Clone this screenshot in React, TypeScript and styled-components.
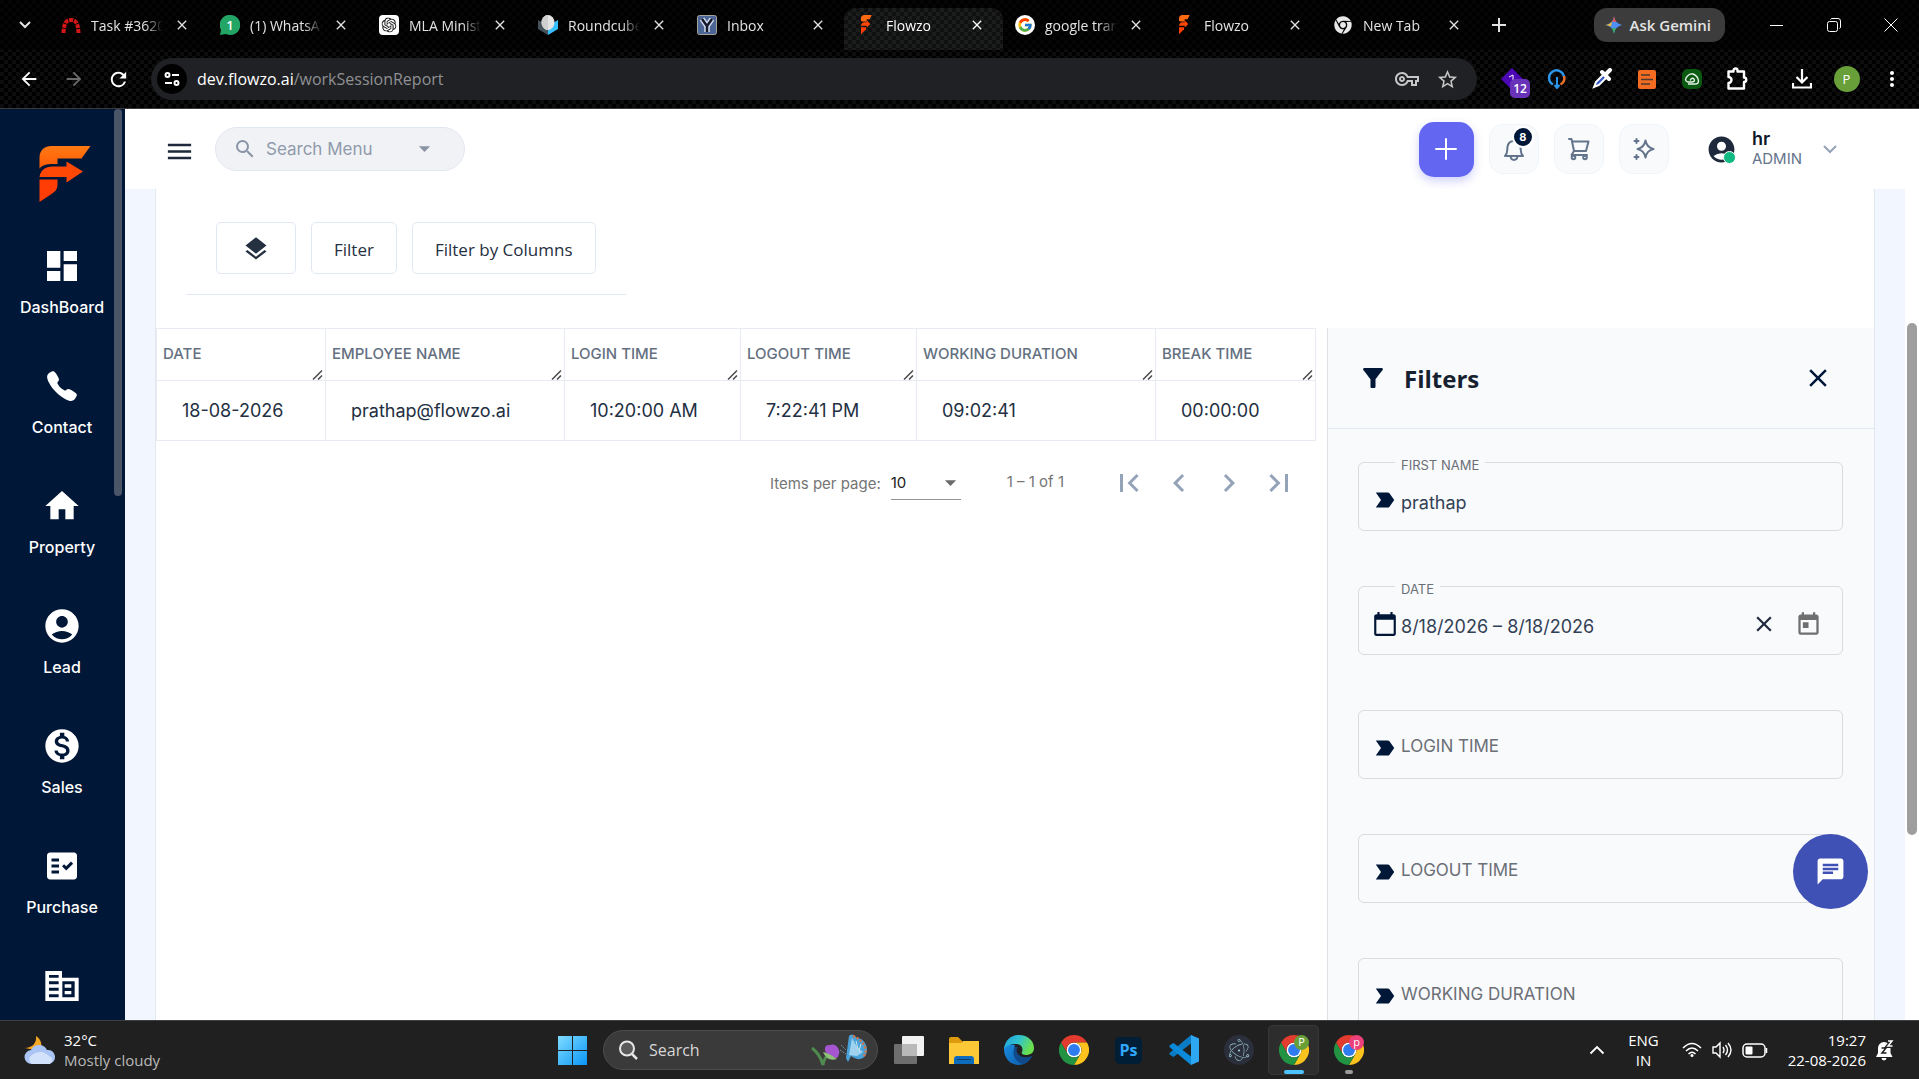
import React from 'react';
import styled, { createGlobalStyle, css } from 'styled-components';
import {
  MdAccountCircle, MdArrowBack, MdArrowDropDown, MdArrowForward, MdCalendarToday, MdChat,
  MdChevronLeft, MdChevronRight, MdClose, MdDashboard, MdFactCheck, MdFilterAlt, MdFirstPage, MdHome,
  MdLabelImportant, MdLastPage, MdLayers, MdMenu, MdMonetizationOn, MdMoreVert, MdOutlineExtension,
  MdOutlineVpnKey, MdRefresh, MdSearch, MdStarBorder, MdToday,
} from 'react-icons/md';
import { IoCall } from 'react-icons/io5';
import { FaChrome } from 'react-icons/fa';
import { FcGoogle } from 'react-icons/fc';
import { SiElectron, SiOpenai } from 'react-icons/si';

const ui = '"Open Sans", "Noto Sans", sans-serif';
const inter = 'Inter, "Liberation Sans", sans-serif';
const navy = '#011738';

const Global = createGlobalStyle`
  *, *::before, *::after { box-sizing: border-box; }
  body { margin: 0; background: #000; font-family: ${inter}; }
  button, input, select { font: inherit; color: inherit; margin: 0; }
  button { border: 0; padding: 0; background: none; cursor: pointer; }
  svg { display: block; flex: none; }
  a { color: inherit; text-decoration: none; }
`;

const Screen = styled.div`
  height: 100vh;
  display: flex;
  flex-direction: column;
  overflow: hidden;
`;

/* ---------- browser frame ---------- */

const checker = (a: string, b: string) => css`
  background: repeating-conic-gradient(${a} 0% 25%, ${b} 0% 50%) 0 0 / 8px 8px;
`;

const Browser = styled.header`
  flex: none;
  font-family: ${ui};
  color: #e3e3e3;
  border-bottom: 1px solid #3a3a3a;
  ${checker('#000', '#0d0d0d')}
`;

const TabStrip = styled.div`
  display: flex;
  align-items: center;
  height: 50px;
  background: rgba(0, 0, 0, 0.6);
`;

const StripButton = styled.button<{ $w: number }>`
  width: ${(p) => p.$w}px;
  height: 34px;
  display: grid;
  place-items: center;
`;

const Tabs = styled.div`
  display: flex;
  flex: 0 1 1431px;
  min-width: 0;
  align-self: stretch;
`;

const Tab = styled.div<{ $active?: boolean }>`
  flex: 1 1 0;
  min-width: 0;
  display: flex;
  align-items: center;
  gap: 10px;
  margin-top: 8px;
  padding: 0 15px 8px 12px;
  font-size: 14px;
  border-radius: 12px 12px 0 0;
  ${(p) => p.$active && css`color: #fff; ${checker('#101010', '#1b1c1c')}`}
`;

const TabTitle = styled.span`
  flex: 1;
  min-width: 0;
  overflow: hidden;
  white-space: nowrap;
  mask-image: linear-gradient(90deg, #000 75%, transparent 100%);
`;

const CloseTab = styled.button`
  width: 18px;
  height: 18px;
  display: grid;
  place-items: center;
  margin-right: 2px;
`;

const Gemini = styled.button`
  display: flex;
  align-items: center;
  gap: 7px;
  height: 34px;
  margin-left: auto;
  padding: 0 14px 0 11px;
  border-radius: 13px;
  background: #3c3c3c;
  font-size: 15px;
  font-weight: 600;
`;

const WindowControls = styled.div`
  display: flex;
  margin-left: 23px;
`;

const Toolbar = styled.div`
  display: flex;
  align-items: center;
  height: 58px;
  padding: 0 5px 0 6px;
`;

const ToolButton = styled.button<{ $dim?: boolean }>`
  width: 45px;
  height: 40px;
  display: grid;
  place-items: center;
  position: relative;
  color: ${(p) => (p.$dim ? '#6b6b6b' : '#fff')};
`;

const ToolGroup = styled.div`
  display: flex;
  margin-left: 20px;
`;

const Omnibox = styled.div`
  flex: 1;
  display: flex;
  align-items: center;
  height: 42px;
  margin: 0 12px 0 10px;
  padding: 0 10px 0 6px;
  border-radius: 21px;
  background: #202124;
  color: #c7c7c7;
  font-size: 16px;
`;

const SiteInfo = styled.button`
  width: 30px;
  height: 30px;
  border-radius: 50%;
  background: #000;
  color: #fff;
  display: grid;
  place-items: center;
  margin-right: 10px;
`;

const Url = styled.span`
  flex: 1;
  color: #8f9093;
  b { color: #fff; font-weight: 400; }
`;

const OmniButton = styled.button`
  width: 40px;
  height: 34px;
  display: grid;
  place-items: center;
`;

const ExtBadge = styled.span`
  position: absolute;
  left: 21px;
  top: 20px;
  width: 20px;
  height: 19px;
  border-radius: 5px;
  background: #6833b8;
  font-size: 12px;
  line-height: 19px;
  font-weight: 600;
  text-align: center;
`;

const Avatar = styled.span`
  width: 26px;
  height: 26px;
  border-radius: 50%;
  background: #689f38;
  font-size: 13px;
  line-height: 26px;
  text-align: center;
`;

/* ---------- application ---------- */

const AppBody = styled.div`
  flex: 1;
  min-height: 0;
  display: flex;
  background: #f2f6fe;
`;

const Sidebar = styled.nav`
  flex: none;
  width: 125px;
  display: flex;
  background: ${navy};
  color: #fff;
  overflow: hidden;
`;

const SideList = styled.div`
  flex: 1;
  display: flex;
  flex-direction: column;
  align-items: center;
  padding: 37px 0 0 10px;
`;

const SideItem = styled.a`
  flex: none;
  height: 120px;
  display: flex;
  flex-direction: column;
  align-items: center;
  gap: 11px;
  font-size: 16px;
  line-height: 20px;
  font-weight: 500;
`;

const SideIcon = styled.span`
  width: 40px;
  height: 40px;
  display: grid;
  place-items: center;
`;

const Brand = styled.a`
  flex: none;
  height: 100px;
  padding-left: 6px;
`;

const SideThumb = styled.div`
  width: 8px;
  height: 387px;
  margin-right: 3px;
  border-radius: 4px;
  background: #4a5568;
`;

const Main = styled.main`
  flex: 1;
  min-width: 0;
  display: flex;
  flex-direction: column;
`;

const TopBar = styled.div`
  flex: none;
  height: 80px;
  display: flex;
  align-items: center;
  padding: 0 65px 0 39px;
  background: #fff;
  color: #1e293b;
`;

const MenuButton = styled.button`
  padding-top: 4px;
  margin-right: 20px;
`;

const SearchPill = styled.label`
  width: 250px;
  height: 44px;
  display: flex;
  align-items: center;
  margin: 0 auto 1px 0;
  padding: 0 26px 0 17px;
  border: 1px solid #e2e8f0;
  border-radius: 22px;
  background: #f1f2f6;
  color: #8a94a6;
`;

const SearchInput = styled.input`
  flex: 1;
  min-width: 0;
  margin-left: 9px;
  border: 0;
  outline: 0;
  padding: 0;
  background: none;
  font-size: 17px;
  &::placeholder { color: #8f9aab; opacity: 1; }
`;

const AddButton = styled.button`
  width: 55px;
  height: 55px;
  display: grid;
  place-items: center;
  border-radius: 15px;
  background: #6366f1;
  color: #fff;
  box-shadow: 0 4px 10px rgba(99, 102, 241, 0.3);
`;

const SquareButton = styled.button`
  width: 50px;
  height: 50px;
  display: grid;
  place-items: center;
  position: relative;
  margin-left: 15px;
  border: 1px solid #f1f5f9;
  border-radius: 14px;
  background: #f8fafc;
  color: #64748b;
`;

const Count = styled.span`
  position: absolute;
  right: 4px;
  top: 1px;
  width: 22px;
  height: 22px;
  border: 2px solid #fff;
  border-radius: 50%;
  background: ${navy};
  color: #fff;
  font-size: 11px;
  line-height: 18px;
  font-weight: 700;
`;

const Profile = styled.button`
  display: flex;
  align-items: center;
  margin-left: 37px;
  text-align: left;
`;

const ProfileIcon = styled.span`
  position: relative;
  color: #1e293b;
  &::after {
    content: '';
    position: absolute;
    right: 1px;
    bottom: 1px;
    width: 13px;
    height: 13px;
    border: 1px solid #fff;
    border-radius: 50%;
    background: #10b981;
  }
`;

const ProfileText = styled.span`
  display: flex;
  flex-direction: column;
  margin: 0 18px 2px 15px;
  font-size: 15px;
  line-height: 20px;
  color: #64748b;
  b { font-size: 18px; line-height: 21px; font-weight: 600; color: #0f172a; }
`;

const Sheet = styled.section`
  flex: 1;
  min-height: 0;
  display: flex;
  flex-direction: column;
  margin: 0 30px;
  border: 1px solid #e2e8f0;
  border-width: 0 1px;
  background: #fff;
`;

const Actions = styled.div`
  align-self: flex-start;
  display: flex;
  gap: 15px;
  margin: 0 30px 33px;
  padding: 33px 30px 20px;
  border-bottom: 1px solid #e2e8f0;
`;

const ActionButton = styled.button`
  min-width: 80px;
  height: 52px;
  display: grid;
  place-items: center;
  padding: 2px 22px 0;
  border: 1px solid #e2e8f0;
  border-radius: 5px;
  color: #253041;
  font-family: ${ui};
  font-size: 17px;
  font-weight: 500;
`;

const Split = styled.div`
  flex: 1;
  min-height: 0;
  display: flex;
`;

const TablePane = styled.div`
  flex: 1;
  min-width: 0;
  padding-right: 12px;
`;

const Table = styled.table`
  width: 100%;
  table-layout: fixed;
  border-collapse: collapse;
`;

const Th = styled.th`
  position: relative;
  height: 52px;
  padding: 0 6px 2px;
  border: 1px solid #e8ebf1;
  color: #64707f;
  font-size: 15px;
  font-weight: 500;
  text-align: left;
  white-space: nowrap;
  svg { position: absolute; right: 2px; bottom: 0; }
`;

const Td = styled.td`
  height: 60px;
  padding: 0 25px;
  border: 1px solid #e8ebf1;
  color: #232f42;
  font-size: 18px;
  white-space: nowrap;
`;

const Pager = styled.div`
  display: flex;
  align-items: center;
  justify-content: flex-end;
  height: 84px;
  padding-right: 11px;
  color: #757575;
  font-size: 15px;
`;

const PageSize = styled.span`
  display: flex;
  align-items: center;
  width: 70px;
  height: 34px;
  margin: 0 46px 0 10px;
  border-bottom: 1px solid #949494;
  color: #212121;
  svg { margin-left: -24px; pointer-events: none; color: #6b6b6b; }
`;

const PageSelect = styled.select`
  width: 70px;
  flex: none;
  border: 0;
  outline: 0;
  background: none;
  appearance: none;
`;

const Range = styled.span`
  margin-right: 40px;
  padding-bottom: 4px;
`;

const PageButton = styled.button`
  width: 50px;
  height: 50px;
  display: grid;
  place-items: center;
  color: #94a3b8;
`;

const FilterPanel = styled.aside`
  flex: none;
  width: 547px;
  border-left: 1px solid #dcdfe4;
  background: #f9fafc;
  overflow: hidden;
`;

const PanelHead = styled.div`
  display: flex;
  align-items: center;
  height: 101px;
  padding: 0 41px 0 30px;
  border-bottom: 1px solid #e2e8f0;
  color: ${navy};
`;

const PanelTitle = styled.h2`
  flex: 1;
  margin: 0 0 0 16px;
  font-family: ${ui};
  font-size: 24px;
  font-weight: 700;
  color: #16202f;
`;

const Fields = styled.div`
  display: flex;
  flex-direction: column;
  gap: 55px;
  padding: 33px 31px 0 30px;
`;

const Field = styled.div`
  position: relative;
  display: flex;
  align-items: center;
  height: 69px;
  padding: 7px 20px 0 11px;
  border: 1px solid #d9dbdf;
  border-radius: 6px;
  color: ${navy};
`;

const FieldLabel = styled.label`
  position: absolute;
  left: 36px;
  top: -8px;
  padding: 0 6px;
  background: #f9fafc;
  color: #6b6f76;
  font-size: 13px;
  line-height: 20px;
`;

const Lead = styled.span`
  width: 30px;
  display: grid;
  place-items: center;
  margin-right: 1px;
`;

const FieldInput = styled.input<{ $filled: boolean }>`
  flex: 1;
  min-width: 0;
  border: 0;
  outline: 0;
  padding: ${(p) => (p.$filled ? '4px 0 0' : '0 0 4px')};
  background: none;
  color: #334155;
  font-size: ${(p) => (p.$filled ? 18 : 17)}px;
  &::placeholder { color: #6b6f76; opacity: 1; }
`;

const FieldButton = styled.button<{ $grey?: boolean }>`
  width: 44px;
  display: grid;
  place-items: center;
  color: ${(p) => (p.$grey ? '#6f6f6f' : '#1e293b')};
  &:last-child { margin-right: -8px; }
`;

const PageScroll = styled.div`
  flex: none;
  width: 14px;
  padding: 0 2px;
  background: #fff;
`;

const PageThumb = styled.div`
  height: 512px;
  margin-top: 214px;
  border-radius: 5px;
  background: #9e9e9e;
`;

const ChatFab = styled.button`
  position: fixed;
  right: 51px;
  bottom: 170px;
  width: 75px;
  height: 75px;
  display: grid;
  place-items: center;
  border-radius: 50%;
  background: #3f51b5;
  color: #fff;
`;

/* ---------- desktop task bar ---------- */

const Taskbar = styled.footer`
  flex: none;
  height: 59px;
  display: grid;
  grid-template-columns: 1fr auto 1fr;
  align-items: center;
  border-top: 1px solid #3c3e40;
  background: #202020;
  color: #fff;
  font-family: ${ui};
  font-size: 15px;
  line-height: 20px;
`;

const Weather = styled.button`
  display: flex;
  align-items: center;
  gap: 8px;
  padding-left: 24px;
  text-align: left;
  color: #b9b9b9;
  b { display: block; color: #fff; font-weight: 400; }
`;

const Dock = styled.div`
  display: flex;
  align-items: center;
  margin-left: 2px;
`;

const DockItem = styled.button<{ $open?: boolean }>`
  position: relative;
  width: 51px;
  height: 50px;
  margin: 0 2px;
  display: grid;
  place-items: center;
  border-radius: 5px;
  ${(p) => p.$open && css`background: #2d2d2d; box-shadow: inset 0 0 0 1px #373737;`}
`;

const Running = styled.span<{ $active?: boolean }>`
  position: absolute;
  bottom: 1px;
  width: ${(p) => (p.$active ? 20 : 8)}px;
  height: 4px;
  border-radius: 2px;
  background: ${(p) => (p.$active ? '#4cc2ff' : '#9a9a9a')};
`;

const ProfileDot = styled.span<{ $c: string }>`
  position: absolute;
  right: 10px;
  top: 10px;
  width: 15px;
  height: 15px;
  border-radius: 50%;
  background: ${(p) => p.$c};
  font-size: 11px;
  line-height: 14px;
`;

const DockSearch = styled.label`
  display: flex;
  align-items: center;
  width: 275px;
  height: 40px;
  margin: 0 3px;
  padding: 0 8px 0 14px;
  border: 1px solid #4d4d4d;
  border-radius: 20px;
  background: #3a3a3a;
  input {
    flex: 1;
    min-width: 0;
    margin-left: 11px;
    padding: 0;
    border: 0;
    outline: 0;
    background: none;
    font-size: 16px;
  }
  input::placeholder { color: #d6d6d6; opacity: 1; }
`;

const PsTile = styled.span`
  width: 27px;
  height: 27px;
  border-radius: 5px;
  background: #001e36;
  color: #31a8ff;
  font-size: 16px;
  line-height: 26px;
  font-weight: 700;
`;

const Tray = styled.div`
  display: flex;
  align-items: center;
  justify-content: flex-end;
  padding-right: 24px;
`;

const TrayText = styled.div<{ $right?: boolean }>`
  text-align: ${(p) => (p.$right ? 'right' : 'center')};
  margin: ${(p) => (p.$right ? '0 9px 0 20px' : '0 23px')};
`;

const TrayIcons = styled.div`
  display: flex;
  align-items: center;
  gap: 10px;
`;

/* ---------- drawings ---------- */

const FlowzoMark = ({ h }: { h: number }) => (
  <svg width={Math.round(h * 0.92)} height={h} viewBox="0 0 51 56" aria-hidden="true">
    <defs>
      <linearGradient id={`flame${h}`} x1="0" y1="0" x2="0" y2="1" gradientUnits="objectBoundingBox">
        <stop offset="0" stopColor="#ff7a12" /><stop offset="1" stopColor="#ff5a08" />
      </linearGradient>
    </defs>
    <path fill={`url(#flame${h})`} d="M0 22.500V12C0 4 5 0 12 0H51L42 12.500H18V18H13C7 18 3 19 0 22.500Z" />
    <path fill="#ff4706" d="M0 31C1 24 6 20.500 13 20.500H27V15.500L43.500 25.500L27 36.500V31Z" />
    <path fill="#ff3d05" d="M0 33.500H18V38C18 43 16 45.500 12 48L0 56Z" />
  </svg>
);

const OfficeIcon = () => (
  <svg width="40" height="40" viewBox="0 0 24 24" aria-hidden="true">
    <path fill="currentColor" fillRule="evenodd" d="M2 3h10v4h10v14H2zM4.200 5.400v1.700H10V5.400zM4.200 9.200v1.700H10V9.200zM4.200 13.100v1.700H10v-1.700zM4.200 17v1.800H10V17zM12.200 9.200v9.600h7.400V9.200z" />
    <path fill="currentColor" d="M13.600 11h4v2h-4zM13.600 15h4v2h-4z" />
  </svg>
);

const ChromeLogo = ({ size = 30 }: { size?: number }) => (
  <svg width={size} height={size} viewBox="0 0 48 48" aria-hidden="true">
    <circle cx="24" cy="24" r="12" fill="#fff" />
    <path fill="#e33b2e" d="M24 12h20.782A23.994 23.994 0 0 0 3.218 12l10.39 18 .01-.002A11.985 11.985 0 0 1 24 12z" />
    <path fill="#fcc31e" d="M34.391 30.003 24.001 48A23.994 23.994 0 0 0 44.78 12.003H24l-.003.01a11.985 11.985 0 0 1 10.394 17.99z" />
    <path fill="#229342" d="M13.609 30.003 3.218 12.006A23.994 23.994 0 0 0 24.003 48l10.39-17.997-.007-.007a11.985 11.985 0 0 1-20.777.007z" />
    <circle cx="24" cy="24" r="9.500" fill="#2f7bf0" />
  </svg>
);

const favicons = {
  redmine: (
    <svg width="20" height="20" viewBox="0 0 20 20"><path d="M2.500 18C3 8 5 5 10 5S17 8 17.500 18" fill="none" stroke="#d31616" strokeWidth="4" strokeDasharray="4 1" /></svg>
  ),
  whatsapp: (
    <svg width="20" height="20" viewBox="0 0 20 20"><path fill="#23a566" d="M10 0a10 10 0 1 1-4 19L0 20l1-5A10 10 0 0 1 10 0z" /><text x="10" y="14.500" fontSize="13" fontWeight="600" fill="#fff" textAnchor="middle">1</text></svg>
  ),
  openai: (
    <svg width="20" height="20" viewBox="0 0 20 20"><rect width="20" height="20" rx="4" fill="#fff" /><g transform="translate(2.500 2.500)" color="#111"><SiOpenai size={15} /></g></svg>
  ),
  roundcube: (
    <svg width="20" height="20" viewBox="0 0 20 20"><path fill="#37beff" d="M10 20V11l10-6v9z" /><path fill="#45525b" d="M10 20V11L0 5v9z" /><ellipse cx="10" cy="7.500" rx="6.500" ry="7.500" fill="#e4e4e4" /><path fill="#cfcfcf" d="M10 0a6.500 7.500 0 0 0 0 15z" /></svg>
  ),
  inbox: (
    <svg width="20" height="20" viewBox="0 0 20 20"><rect x=".5" y=".5" width="19" height="19" rx="2" fill="#4a6596" stroke="#a8a39a" /><path d="M5 4l5 7 5-7M10 11v6" fill="none" stroke="#d5dced" strokeWidth="5.500" /><path d="M5 4l5 7 5-7M10 11v6" fill="none" stroke="#141a2c" strokeWidth="2.500" /></svg>
  ),
  flowzo: <svg width="20" height="20" viewBox="-6 2 56 52"><path fill="#ff6a10" d="M8 16V10Q8 0 18 0H38L32 12H24V18H12z" /><path fill="#ff4706" d="M8 30Q9 20 18 20H24V15L34 25L24 35V30Z" /><path fill="#ff3d05" d="M8 34H22V40L8 54Z" /></svg>,
  google: (
    <svg width="20" height="20" viewBox="0 0 20 20"><circle cx="10" cy="10" r="10" fill="#fff" /><g transform="translate(2 2)"><FcGoogle size={16} /></g></svg>
  ),
  chrome: (
    <svg width="20" height="20" viewBox="0 0 20 20"><g transform="translate(1 1)" color="#e8e8e8"><FaChrome size={18} /></g></svg>
  ),
};

const Sparkle = () => (
  <svg width="18" height="18" viewBox="0 0 18 18" aria-hidden="true">
    <defs><linearGradient id="gem" x1="0" y1="1" x2="1" y2="0"><stop offset="0" stopColor="#34b35a" /><stop offset=".35" stopColor="#4d8ff5" /><stop offset=".65" stopColor="#4d8ff5" /><stop offset="1" stopColor="#f0524a" /></linearGradient></defs>
    <path fill="url(#gem)" d="M9 0C9.500 5 13 8.500 18 9C13 9.500 9.500 13 9 18C8.500 13 5 9.500 0 9C5 8.500 8.500 5 9 0Z" />
    <path fill="#f2bc2b" d="M0 9C3 8.700 5.500 7.300 7 5.400L6 10.500C4 9.800 3 9.300 0 9Z" />
    <path fill="#ee5248" d="M9 0C9.300 2.500 10.200 4.500 11.500 6L7 5.400C8.200 4 8.800 2 9 0Z" />
    <path fill="#34b35a" d="M9 18C8.700 15.500 7.800 13.500 6.500 12L11 12.600C9.800 14 9.200 16 9 18Z" />
  </svg>
);

const BellIcon = () => (
  <svg width="24" height="26" viewBox="0 0 24 26" fill="none" stroke="currentColor" strokeWidth="2" strokeLinejoin="round" strokeLinecap="round" aria-hidden="true">
    <path d="M3 20C6 17 5 14 5.500 11C6 7 8.500 5 12 5S18 7 18.500 11C19 14 18 17 21 20Z" /><path d="M12 5V3M8.500 20.500C9 25 15 25 15.500 20.500" />
  </svg>
);

const CartIcon = () => (
  <svg width="24" height="24" viewBox="0 0 24 24" fill="none" stroke="currentColor" strokeWidth="2" strokeLinejoin="round" strokeLinecap="round" aria-hidden="true">
    <path d="M2 2H4.500L7 14H19L21.500 4.500H5.500" /><path d="M7 14L4.500 18H20" /><circle cx="6.500" cy="20.500" r="1.800" /><circle cx="18" cy="20.500" r="1.800" />
  </svg>
);

const StarsIcon = () => (
  <svg width="24" height="24" viewBox="0 0 24 24" fill="none" stroke="currentColor" strokeWidth="2" strokeLinejoin="round" strokeLinecap="round" aria-hidden="true">
    <path d="M13.500 3.500C14.300 8 17 11 21.500 12C17 13 14.300 16 13.500 20.500C12.700 16 10 13 5.500 12C10 11 12.700 8 13.500 3.500Z" />
    <path d="M4.500 2V6M2.500 4H6.500M4.500 18V22M2.500 20H6.500" />
  </svg>
);

const Grip = () => (
  <svg width="11" height="11" viewBox="0 0 11 11" stroke="#4a4a4a" strokeWidth="1.500" aria-hidden="true"><path d="M1 10.500L10 1.500M6 10.500L10 6.500" /></svg>
);

const ExtIcons = () => (
  <>
    <ToolButton aria-label="Extension with 12 alerts">
      <svg width="22" height="22" viewBox="0 0 22 22"><path fill="#4d08b5" d="M11 0L22 11L11 22L0 11Z" /><path d="M8 9l4-2v5" stroke="#fff" fill="none" /></svg>
      <ExtBadge>12</ExtBadge>
    </ToolButton>
    <ToolButton aria-label="Download helper">
      <svg width="20" height="20" viewBox="0 0 20 20" fill="none" strokeWidth="2.500"><path stroke="#2b95e8" d="M6 15.500A7.500 7.500 0 1 1 17 8" /><path stroke="#e8702a" d="M17 7A7.500 7.500 0 0 1 13.500 15.500" /><path stroke="#2b95e8" d="M10 8V19M7.500 16L10 19L12.500 16" strokeWidth="2" /></svg>
    </ToolButton>
    <ToolButton aria-label="Colour picker">
      <svg width="22" height="22" viewBox="0 0 22 22"><path d="M3 19L5 14L13 6L16 9L8 17Z" fill="#3558c9" stroke="#fff" strokeWidth="2" /><path d="M11 4L18 11M14 7L19 2" stroke="#fff" strokeWidth="4" strokeLinecap="round" /></svg>
    </ToolButton>
    <ToolButton aria-label="Notes">
      <svg width="18" height="19" viewBox="0 0 18 19"><rect width="18" height="19" rx="2" fill="#f36c21" /><path d="M3 5h9M3 9.500h12M3 14h9" stroke="#4a3b30" strokeWidth="1.500" /></svg>
    </ToolButton>
    <ToolButton aria-label="Cloud">
      <svg width="20" height="20" viewBox="0 0 20 20"><rect width="20" height="20" rx="6" fill="#0b5a12" /><path d="M8 11.500Q10 8 12 10Q13.500 12.500 10 13H6Q2.500 12 4 9Q7 4 11 5Q16 7 16.500 12Q16.500 15 13 15H6" stroke="#e8f5e9" strokeWidth="1.400" fill="none" /></svg>
    </ToolButton>
  </>
);

const EdgeLogo = () => (
  <svg width="30" height="30" viewBox="0 0 30 30" aria-hidden="true">
    <defs>
      <linearGradient id="edgeTop" x1="0" y1="0" x2="1" y2=".4"><stop offset="0" stopColor="#1e9de0" /><stop offset=".5" stopColor="#2fc2cf" /><stop offset="1" stopColor="#6be04e" /></linearGradient>
      <linearGradient id="edgeLow" x1="0" y1="0" x2="1" y2="1"><stop offset="0" stopColor="#1b8be0" /><stop offset="1" stopColor="#0c59a4" /></linearGradient>
    </defs>
    <path fill="url(#edgeLow)" d="M0 14C0 9 6 9 11 10C10 13 10 17 13 20C17 24 24 23 28 21C25 27 20 30 14.500 30C6 30 0 23 0 14Z" />
    <path fill="#114a8b" d="M11 12C7 19 11 27 19 29C23 28 26 25 28 21C24 23 18 23 15 20C12 18 12 14 14 12Z" />
    <path fill="url(#edgeTop)" d="M0 14C1 5 7 0 15 0C24 0 30 6 30 13C30 18 26 20 22 20C18 20 17 18 18 17C19 15 19 9 12 9C6 9 2 11 0 14Z" />
  </svg>
);

const CodeLogo = () => (
  <svg width="30" height="30" viewBox="0 0 30 30" aria-hidden="true">
    <path fill="#0b7cc4" d="M22 0V8.500L4.500 22L0.500 19.500V18Z" /><path fill="#0a8ad8" d="M22 30V21.500L4.500 8L0.500 10.500V12Z" /><path fill="#2fa8f4" d="M22 0L30 3.500V26.500L22 30Z" />
  </svg>
);

const GardenArt = () => (
  <svg width="58" height="34" viewBox="0 0 58 34" aria-hidden="true">
    <path d="M1 15Q9 21 12 32M12 32Q13 24 19 21" stroke="#4f8a4f" strokeWidth="3" fill="none" />
    <path fill="#a455cf" d="M14 18Q13 11 19 12Q24 10 27 15Q30 20 26 25Q18 24 14 18Z" /><path fill="#8fc07a" d="M12 19Q18 20 26 26Q16 29 12 19Z" />
    <path fill="#4aa3d8" d="M35 25L38 3Q41 -1 46 5Q52 5 55 12Q58 20 52 25Q46 28 40 23L37 29Z" /><path fill="#9fd2ee" d="M38 22L41 5L46 14L52 19L46 23Z" /><path d="M42 3Q50 6 54 14Q56 20 52 24" stroke="#d8703f" strokeWidth="2.500" strokeDasharray="2 2" fill="none" /><path d="M45 8L47 16M50 11L48 18" stroke="#cfe6f3" /><path d="M30 12L35 17M29 17L35 21" stroke="#6f8ba0" strokeDasharray="2 1" />
  </svg>
);

/* ---------- data ---------- */

const tabs: { icon: keyof typeof favicons; title: string; active?: boolean }[] = [
  { icon: 'redmine', title: 'Task #3620' },
  { icon: 'whatsapp', title: '(1) WhatsApp' },
  { icon: 'openai', title: 'MLA Minister' },
  { icon: 'roundcube', title: 'Roundcube' },
  { icon: 'inbox', title: 'Inbox' },
  { icon: 'flowzo', title: 'Flowzo', active: true },
  { icon: 'google', title: 'google translate' },
  { icon: 'flowzo', title: 'Flowzo' },
  { icon: 'chrome', title: 'New Tab' },
];

const nav = [
  { icon: <MdDashboard size={40} />, label: 'DashBoard' },
  { icon: <IoCall size={34} />, label: 'Contact' },
  { icon: <MdHome size={40} />, label: 'Property' },
  { icon: <MdAccountCircle size={40} />, label: 'Lead' },
  { icon: <MdMonetizationOn size={40} />, label: 'Sales' },
  { icon: <MdFactCheck size={36} />, label: 'Purchase' },
];

const columns = [
  { title: 'DATE', value: '18-08-2026', width: 169 },
  { title: 'EMPLOYEE NAME', value: 'prathap@flowzo.ai', width: 239 },
  { title: 'LOGIN TIME', value: '10:20:00 AM', width: 176 },
  { title: 'LOGOUT TIME', value: '7:22:41 PM', width: 176 },
  { title: 'WORKING DURATION', value: '09:02:41', width: 239 },
  { title: 'BREAK TIME', value: '00:00:00', width: 160 },
];

const Col = styled.col<{ $w: number }>`
  width: ${(p) => p.$w}px;
`;

const TextFilter = ({ id, label, value = '' }: { id: string; label: string; value?: string }) => (
  <Field>
    {value && <FieldLabel htmlFor={id}>{label}</FieldLabel>}
    <Lead><MdLabelImportant size={26} /></Lead>
    <FieldInput id={id} $filled={!!value} defaultValue={value} placeholder={value ? undefined : label} aria-label={label} />
  </Field>
);

export default function App() {
  return (
    <Screen>
      <Global />
      <Browser>
        <TabStrip>
          <StripButton $w={49} aria-label="Search tabs">
            <svg width="12" height="8" viewBox="0 0 12 8" fill="none" stroke="currentColor" strokeWidth="2"><path d="M1 1l5 5 5-5" /></svg>
          </StripButton>
          <Tabs role="tablist">
            {tabs.map((t, i) => (
              <Tab key={i} role="tab" aria-selected={!!t.active} $active={t.active}>
                {favicons[t.icon]}
                <TabTitle>{t.title}</TabTitle>
                <CloseTab aria-label={`Close ${t.title}`}><MdClose size={16} /></CloseTab>
              </Tab>
            ))}
          </Tabs>
          <StripButton $w={38} aria-label="New tab">
            <svg width="14" height="14" viewBox="0 0 14 14" stroke="currentColor" strokeWidth="2"><path d="M7 0v14M0 7h14" /></svg>
          </StripButton>
          <Gemini><Sparkle />Ask Gemini</Gemini>
          <WindowControls>
            <StripButton $w={57} aria-label="Minimize"><svg width="13" height="13" stroke="#fff"><path d="M0 6.500h13" /></svg></StripButton>
            <StripButton $w={57} aria-label="Restore"><svg width="14" height="14" fill="none" stroke="#fff"><rect x=".5" y="3.500" width="10" height="10" rx="2" /><path d="M3.500 1.500Q4 .5 5 .5H11Q13.500 .5 13.500 3V9Q13.500 10 12.500 10.500" /></svg></StripButton>
            <StripButton $w={57} aria-label="Close"><svg width="14" height="14" stroke="#fff"><path d="M.5 .5l13 13M13.500 .5l-13 13" /></svg></StripButton>
          </WindowControls>
        </TabStrip>
        <Toolbar>
          <ToolButton aria-label="Back"><MdArrowBack size={22} /></ToolButton>
          <ToolButton $dim aria-label="Forward"><MdArrowForward size={22} /></ToolButton>
          <ToolButton aria-label="Reload"><MdRefresh size={23} /></ToolButton>
          <Omnibox>
            <SiteInfo aria-label="Site information">
              <svg width="16" height="14" viewBox="0 0 16 14" fill="none" stroke="currentColor" strokeWidth="2"><circle cx="3.500" cy="3" r="2" /><path d="M8 3h7M1 11h7" /><circle cx="12.500" cy="11" r="2" /></svg>
            </SiteInfo>
            <Url><b>dev.flowzo.ai</b>/workSessionReport</Url>
            <OmniButton aria-label="Saved passwords"><MdOutlineVpnKey size={24} /></OmniButton>
            <OmniButton aria-label="Bookmark"><MdStarBorder size={23} /></OmniButton>
          </Omnibox>
          <ExtIcons />
          <ToolButton aria-label="Extensions">
            <svg width="24" height="24" viewBox="0 0 24 24" fill="none" stroke="currentColor" strokeWidth="2.400" strokeLinejoin="round"><path d="M3.500 4.500H8.500V3.500A1.500 1.500 0 0 1 12.500 3.500V4.500H19V10.500A2 2 0 0 1 19 15V21.500H3.500V16A3 3 0 0 0 3.500 10Z" /></svg>
          </ToolButton>
          <ToolGroup>
            <ToolButton aria-label="Downloads">
              <svg width="20" height="20" viewBox="0 0 20 20" fill="none" stroke="currentColor" strokeWidth="2.200"><path d="M10 0v13M4.500 8l5.500 5.500L15.500 8M1 14v4.500h18V14" /></svg>
            </ToolButton>
            <ToolButton aria-label="Profile"><Avatar>P</Avatar></ToolButton>
            <ToolButton aria-label="Menu"><MdMoreVert size={24} /></ToolButton>
          </ToolGroup>
        </Toolbar>
      </Browser>

      <AppBody>
        <Sidebar>
          <SideList>
            <Brand href="#" aria-label="Flowzo"><FlowzoMark h={56} /></Brand>
            {nav.map((n) => (
              <SideItem key={n.label} href="#"><SideIcon>{n.icon}</SideIcon>{n.label}</SideItem>
            ))}
            <SideItem href="#" aria-label="Company"><SideIcon><OfficeIcon /></SideIcon></SideItem>
          </SideList>
          <SideThumb />
        </Sidebar>

        <Main>
          <TopBar>
            <MenuButton aria-label="Toggle menu"><MdMenu size={31} /></MenuButton>
            <SearchPill>
              <MdSearch size={24} />
              <SearchInput placeholder="Search Menu" aria-label="Search Menu" />
              <MdArrowDropDown size={27} />
            </SearchPill>
            <AddButton aria-label="Add"><svg width="22" height="22" stroke="#fff" strokeWidth="2" strokeLinecap="round"><path d="M11 1v20M1 11h20" /></svg></AddButton>
            <SquareButton aria-label="Notifications"><BellIcon /><Count>8</Count></SquareButton>
            <SquareButton aria-label="Cart"><CartIcon /></SquareButton>
            <SquareButton aria-label="Assistant"><StarsIcon /></SquareButton>
            <Profile>
              <ProfileIcon><MdAccountCircle size={31} /></ProfileIcon>
              <ProfileText><b>hr</b>ADMIN</ProfileText>
              <svg width="20" height="14" viewBox="0 0 20 14" fill="none" stroke="#94a3b8" strokeWidth="2"><path d="M4 4l6 6 6-6" /></svg>
            </Profile>
          </TopBar>

          <Sheet>
            <Actions>
              <ActionButton aria-label="Layers"><MdLayers size={28} /></ActionButton>
              <ActionButton>Filter</ActionButton>
              <ActionButton>Filter by Columns</ActionButton>
            </Actions>
            <Split>
              <TablePane>
                <Table>
                  <colgroup>{columns.map((c) => <Col key={c.title} $w={c.width} />)}</colgroup>
                  <thead><tr>{columns.map((c) => <Th key={c.title}>{c.title}<Grip /></Th>)}</tr></thead>
                  <tbody><tr>{columns.map((c) => <Td key={c.title}>{c.value}</Td>)}</tr></tbody>
                </Table>
                <Pager>
                  <label htmlFor="page-size">Items per page:</label>
                  <PageSize>
                    <PageSelect id="page-size" defaultValue="10"><option>10</option><option>25</option><option>50</option></PageSelect>
                    <MdArrowDropDown size={27} />
                  </PageSize>
                  <Range>1 – 1 of 1</Range>
                  <PageButton aria-label="First page"><MdFirstPage size={36} /></PageButton>
                  <PageButton aria-label="Previous page"><MdChevronLeft size={36} /></PageButton>
                  <PageButton aria-label="Next page"><MdChevronRight size={36} /></PageButton>
                  <PageButton aria-label="Last page"><MdLastPage size={36} /></PageButton>
                </Pager>
              </TablePane>
              <FilterPanel>
                <PanelHead>
                  <MdFilterAlt size={30} />
                  <PanelTitle>Filters</PanelTitle>
                  <button aria-label="Close filters"><MdClose size={30} /></button>
                </PanelHead>
                <Fields>
                  <TextFilter id="first-name" label="FIRST NAME" value="prathap" />
                  <Field>
                    <FieldLabel htmlFor="date">DATE</FieldLabel>
                    <Lead><MdCalendarToday size={26} /></Lead>
                    <FieldInput id="date" $filled defaultValue="8/18/2026 – 8/18/2026" />
                    <FieldButton aria-label="Clear date"><MdClose size={26} /></FieldButton>
                    <FieldButton $grey aria-label="Open calendar"><MdToday size={27} /></FieldButton>
                  </Field>
                  <TextFilter id="login-time" label="LOGIN TIME" />
                  <TextFilter id="logout-time" label="LOGOUT TIME" />
                  <TextFilter id="working-duration" label="WORKING DURATION" />
                </Fields>
              </FilterPanel>
            </Split>
          </Sheet>
        </Main>
        <PageScroll><PageThumb /></PageScroll>
        <ChatFab aria-label="Open chat"><MdChat size={31} /></ChatFab>
      </AppBody>

      <Taskbar>
        <Weather>
          <svg width="32" height="32" viewBox="0 0 32 32" aria-hidden="true">
            <path fill="#f5a623" d="M12 2C17 5 19 11 16 17L1 14C8 14 13 9 12 2Z" />
            <path fill="#a9c4f5" d="M8 30a7 7 0 0 1-1-14 9 9 0 0 1 16 0 6.500 6.500 0 0 1 2 14z" /><path fill="#d3e2fb" d="M8 30a5 5 0 0 1 0-9 12 12 0 0 1 17 1q6 2 1 8z" />
          </svg>
          <span><b>32°C</b>Mostly cloudy</span>
        </Weather>
        <Dock>
          <DockItem aria-label="Start">
            <svg width="29" height="29" viewBox="0 0 29 29"><defs><linearGradient id="win" x1="0" y1="0" x2="1" y2="1"><stop offset="0" stopColor="#80dcff" /><stop offset="1" stopColor="#0a95f7" /></linearGradient></defs><path fill="url(#win)" d="M0 0h14v14H0zM15 0h14v14H15zM0 15h14v14H0zM15 15h14v14H15z" /></svg>
          </DockItem>
          <DockSearch>
            <svg width="20" height="20" viewBox="0 0 20 20" fill="none" stroke="#e6e6e6" strokeWidth="2"><circle cx="9" cy="8.500" r="7" fill="#5a5a5a" /><path d="M14 14l5 5" strokeWidth="2.500" /></svg>
            <input placeholder="Search" aria-label="Search" />
            <GardenArt />
          </DockSearch>
          <DockItem aria-label="Task view"><svg width="30" height="28"><rect y="8" width="23" height="20" rx="1" fill="#6e6e6e" /><rect x="8" width="22" height="20" rx="1" fill="#f2f2f2" /><rect x="8" y="8" width="15" height="12" fill="#b9b9b9" /></svg></DockItem>
          <DockItem aria-label="File Explorer"><svg width="30" height="27"><path fill="#dd9a0c" d="M0 2Q0 0 2 0H9L13 4V10H0z" /><path fill="#fdc836" d="M0 6H12L14 4H30V27H0z" /><path fill="#0f6cbd" d="M5 27V22Q5 19 8 19H22Q25 19 25 22V27z" /><path stroke="#073f73" d="M8 22.500H22" /></svg></DockItem>
          <DockItem aria-label="Edge"><EdgeLogo /></DockItem>
          <DockItem aria-label="Chrome"><ChromeLogo /></DockItem>
          <DockItem aria-label="Photoshop"><PsTile>Ps</PsTile></DockItem>
          <DockItem aria-label="Visual Studio Code"><CodeLogo /></DockItem>
          <DockItem aria-label="Electron"><svg width="30" height="30"><circle cx="15" cy="15" r="15" fill="#2b2e3b" /><g transform="translate(4 4)" color="#a5d4dc"><SiElectron size={22} /></g></svg></DockItem>
          <DockItem $open aria-label="Chrome, first profile"><ChromeLogo /><ProfileDot $c="#689f38">P</ProfileDot><Running $active /></DockItem>
          <DockItem aria-label="Chrome, second profile"><ChromeLogo /><ProfileDot $c="#ec407a">p</ProfileDot><Running /></DockItem>
        </Dock>
        <Tray>
          <svg width="16" height="10" viewBox="0 0 16 10" fill="none" stroke="#fff" strokeWidth="1.800"><path d="M1.500 8.500L8 2l6.500 6.500" /></svg>
          <TrayText>ENG<br />IN</TrayText>
          <TrayIcons>
            <svg width="20" height="16" viewBox="0 0 20 16" fill="none" stroke="#fff" strokeWidth="1.500"><path d="M1 6Q10-3 19 6M4 9Q10 3 16 9M6.500 12Q10 8.500 13.500 12" /><circle cx="10" cy="13.500" r="1.500" fill="#fff" stroke="none" /></svg>
            <svg width="20" height="18" viewBox="0 0 20 18" fill="none" stroke="#fff" strokeWidth="1.400"><path d="M1 6h3l4-4v14l-4-4H1zM11 6q2 3 0 6M13.500 4q4 5 0 10M16 2q6 7 0 14" /></svg>
            <svg width="26" height="15" viewBox="0 0 26 15" fill="none" stroke="#fff" strokeWidth="1.500"><rect x="1" y="1" width="22" height="13" rx="4" /><rect x="3.500" y="3.500" width="7" height="8" rx="1" fill="#fff" stroke="none" /><path d="M24.500 5v5" /></svg>
          </TrayIcons>
          <TrayText $right>19:27<br />22-08-2026</TrayText>
          <svg width="20" height="22" viewBox="0 0 20 22" aria-hidden="true"><path fill="#fff" d="M9 3a6.500 6.500 0 0 1 6.500 6.500V14l2 4H1l2-4V9.500A6 6 0 0 1 9 3zM6.500 19h5a2.500 2.500 0 0 1-5 0z" /><path d="M6.500 9h4.500l-4 5h4.500" stroke="#202020" strokeWidth="1.500" fill="none" /><path d="M13 2h4l-4 5h4.500" stroke="#202020" strokeWidth="4" fill="none" /><path d="M13 2h4l-4 5h4.500" stroke="#fff" strokeWidth="1.500" fill="none" /></svg>
        </Tray>
      </Taskbar>
    </Screen>
  );
}
